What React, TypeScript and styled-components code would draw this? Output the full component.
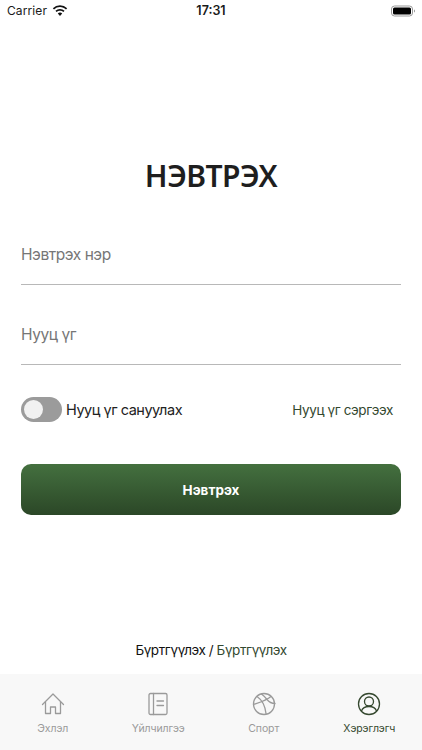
import React, { useState } from 'react';
import styled, { createGlobalStyle } from 'styled-components';

const GlobalStyle = createGlobalStyle`
  html, body {
    margin: 0;
    padding: 0;
    background: #fff;
  }
  * {
    box-sizing: border-box;
  }
`;

const Screen = styled.div`
  width: 422px;
  height: 750px;
  display: flex;
  flex-direction: column;
  overflow: hidden;
  background: #fff;
  font-family: Inter, "Liberation Sans", sans-serif;
`;

const StatusBar = styled.div`
  height: 21px;
  padding: 0 7px;
  display: grid;
  grid-template-columns: 1fr auto 1fr;
  align-items: center;
  color: #1a1a1a;
  font-size: 12px;
`;

const Carrier = styled.div`
  display: flex;
  align-items: center;
  gap: 5px;
  letter-spacing: 0.1px;
`;

const Clock = styled.div`
  font-weight: 600;
  font-size: 12.5px;
`;

const Battery = styled.div`
  justify-self: end;
  display: flex;
`;

const Main = styled.main`
  flex: 1;
  padding: 135px 21px 0;
  display: flex;
  flex-direction: column;
`;

const Title = styled.h1`
  margin: 0 0 38px;
  height: 40px;
  line-height: 40px;
  text-align: center;
  font-family: "Noto Sans", sans-serif;
  font-weight: 600;
  font-size: 30px;
  letter-spacing: -0.5px;
  color: #1e1e1e;
`;

const Field = styled.label`
  display: block;
  height: 80px;
  border-bottom: 1px solid #b8b8b8;
`;

const FieldStack = styled.div`
  display: flex;
  flex-direction: column;
  margin-top: -29px;
`;

const Input = styled.input`
  display: block;
  width: 100%;
  height: 48px;
  margin-top: 25px;
  border: none;
  outline: none;
  padding: 0;
  font: 400 15.5px Inter, sans-serif;
  letter-spacing: -0.45px;
  color: #222;
  background: transparent;
  &::placeholder {
    color: #767676;
    opacity: 1;
  }
`;

const OptionsRow = styled.div`
  margin-top: 32px;
  height: 25px;
  padding-right: 8px;
  display: flex;
  align-items: center;
  justify-content: space-between;
`;

const Remember = styled.div`
  display: flex;
  align-items: center;
  gap: 4px;
  font-size: 14.5px;
  letter-spacing: -0.47px;
  color: #222;
`;

const Toggle = styled.button<{ $on: boolean }>`
  position: relative;
  width: 41px;
  height: 25px;
  border: none;
  border-radius: 13px;
  padding: 0;
  background: ${p => (p.$on ? '#3f6b3d' : '#9b9b9b')};
  cursor: pointer;
`;

const Knob = styled.span<{ $on: boolean }>`
  position: absolute;
  top: 3px;
  left: ${p => (p.$on ? '19px' : '3px')};
  width: 19px;
  height: 19px;
  border-radius: 50%;
  background: #f1f1f1;
`;

const ForgotLink = styled.a`
  font-size: 13.5px;
  letter-spacing: -0.37px;
  color: #33482f;
`;

const Submit = styled.button`
  margin-top: 42px;
  height: 51px;
  width: 100%;
  border: none;
  border-radius: 10px;
  background: linear-gradient(#44703f, #2b4727);
  color: #fff;
  font: 700 13.5px Inter, sans-serif;
`;

const Footer = styled.div`
  margin-top: auto;
  height: 32px;
  text-align: center;
  font-size: 13.5px;
  letter-spacing: -0.42px;
  line-height: 16px;
  color: #111;
`;

const FooterLink = styled.span`
  color: #33482f;
`;

const TabBar = styled.nav`
  height: 76px;
  background: #f8f8f8;
  display: grid;
  grid-template-columns: repeat(4, 1fr);
  padding-top: 18px;
`;

const Tab = styled.div<{ $active?: boolean }>`
  display: flex;
  flex-direction: column;
  align-items: center;
  gap: 6px;
  font-size: 10.5px;
  letter-spacing: -0.1px;
  line-height: 14px;
  color: ${p => (p.$active ? '#35482f' : '#9a9a9a')};
`;

const TabIcon = styled.svg`
  width: 24px;
  height: 24px;
  fill: none;
  stroke: currentColor;
  stroke-width: 1.3;
  stroke-linecap: round;
  stroke-linejoin: round;
`;

const HomeIcon = () => (
  <TabIcon viewBox="0 0 24 24">
    <path d="M1.500 12.500 12 2l10.500 10.500" />
    <path d="M4.500 10v11.500h5V15h5v6.500h5V10" />
  </TabIcon>
);

const BookIcon = () => (
  <TabIcon viewBox="0 0 24 24">
    <rect x="3" y="1.500" width="18" height="21" rx="1.500" />
    <path d="M7.500 1.500v21M11 9h6.500M11 13.500h6.500" />
  </TabIcon>
);

const BallIcon = () => (
  <TabIcon viewBox="0 0 24 24">
    <circle cx="12" cy="12" r="10.500" />
    <path d="M5 4.500c4.500 3 8 8.500 9 17" />
    <path d="M1.500 12.500c6 -2 13 -4 17.500 -8" />
    <path d="M9.500 2c2 1.500 4 3.500 5.500 5.500 2 2.500 5 4 8 4" />
  </TabIcon>
);

const UserIcon = () => (
  <TabIcon viewBox="0 0 24 24">
    <circle cx="12" cy="12" r="10.500" />
    <circle cx="12" cy="9.500" r="4.500" />
    <path d="M4.500 19c1-3 4-4.500 7.500-4.500s6.500 1.500 7.500 4.500" />
  </TabIcon>
);

const tabs = [
  { label: 'Эхлэл', icon: <HomeIcon /> },
  { label: 'Үйлчилгээ', icon: <BookIcon /> },
  { label: 'Спорт', icon: <BallIcon /> },
  { label: 'Хэрэглэгч', icon: <UserIcon />, active: true },
];

const App = () => {
  const [remember, setRemember] = useState(false);

  return (
    <Screen>
      <GlobalStyle />
      <StatusBar>
        <Carrier>
          Carrier
          <svg width="16" height="12" viewBox="0 0 16 12" fill="#111">
            <path d="M8 2.100c2.300 0 4.400.9 6 2.400l1.200-1.300A10.400 10.400 0 0 0 8 .3 10.400 10.400 0 0 0 .8 3.200L2 4.500a8.700 8.700 0 0 1 6-2.400z" />
            <path d="M8 5.800c1.300 0 2.500.5 3.400 1.300l1.200-1.300A6.800 6.800 0 0 0 8 4a6.800 6.800 0 0 0-4.600 1.800l1.200 1.300c.9-.8 2.100-1.300 3.400-1.300z" />
            <path d="M8 7.600c-.9 0-1.600.3-2.200.8L8 11l2.200-2.600c-.6-.5-1.300-.8-2.200-.8z" />
          </svg>
        </Carrier>
        <Clock>17:31</Clock>
        <Battery>
          <svg width="24" height="12" viewBox="0 0 24 12">
            <rect x="0.500" y="1" width="21" height="10" rx="3" fill="none" stroke="#999" />
            <rect x="2" y="2.500" width="18" height="7" rx="1.500" fill="#000" />
            <path d="M23 4.500v3c.6-.2 1-.8 1-1.500s-.4-1.300-1-1.500z" fill="#999" />
          </svg>
        </Battery>
      </StatusBar>
      <Main>
        <Title>НЭВТРЭХ</Title>
        <FieldStack>
          <Field>
            <Input placeholder="Нэвтрэх нэр" />
          </Field>
          <Field>
            <Input placeholder="Нууц үг" type="password" />
          </Field>
        </FieldStack>
        <OptionsRow>
          <Remember>
            <Toggle $on={remember} onClick={() => setRemember(!remember)}>
              <Knob $on={remember} />
            </Toggle>
            Нууц үг сануулах
          </Remember>
          <ForgotLink>Нууц үг сэргээх</ForgotLink>
        </OptionsRow>
        <Submit>Нэвтрэх</Submit>
        <Footer>
          Бүртгүүлэх / <FooterLink>Бүртгүүлэх</FooterLink>
        </Footer>
      </Main>
      <TabBar>
        {tabs.map(tab => (
          <Tab key={tab.label} $active={tab.active}>
            {tab.icon}
            {tab.label}
          </Tab>
        ))}
      </TabBar>
    </Screen>
  );
};

export default App;
